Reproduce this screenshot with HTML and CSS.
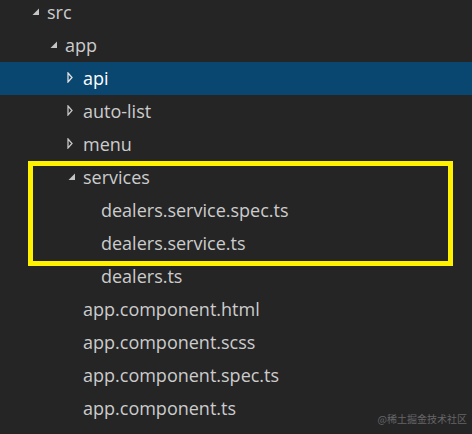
FILE: index.html
```html
<!DOCTYPE html>
<html>
<head>
<meta charset="utf-8">
<link rel="stylesheet" href="styles.css">
</head>
<body>
<div class="tree">
  <div class="row d0"><span class="tw"><svg class="exp" width="8" height="8" viewBox="0 0 8 8"><path d="M7 0.5 L7 7 L0.5 7 Z"/></svg></span><span class="label">src</span></div>
  <div class="row d1"><span class="tw"><svg class="exp" width="8" height="8" viewBox="0 0 8 8"><path d="M7 0.5 L7 7 L0.5 7 Z"/></svg></span><span class="label">app</span></div>
  <div class="row d2 selected"><span class="tw"><svg class="col" width="6" height="11" viewBox="0 0 6 11"><path d="M1 1 L5 5.5 L1 10 Z"/></svg></span><span class="label">api</span></div>
  <div class="row d2"><span class="tw"><svg class="col" width="6" height="11" viewBox="0 0 6 11"><path d="M1 1 L5 5.5 L1 10 Z"/></svg></span><span class="label">auto-list</span></div>
  <div class="row d2"><span class="tw"><svg class="col" width="6" height="11" viewBox="0 0 6 11"><path d="M1 1 L5 5.5 L1 10 Z"/></svg></span><span class="label">menu</span></div>
  <div class="group">
    <div class="highlight"></div>
    <div class="row d2"><span class="tw"><svg class="exp" width="8" height="8" viewBox="0 0 8 8"><path d="M7 0.5 L7 7 L0.5 7 Z"/></svg></span><span class="label">services</span></div>
    <div class="row d3"><span class="tw"></span><span class="label">dealers.service.spec.ts</span></div>
    <div class="row d3"><span class="tw"></span><span class="label">dealers.service.ts</span></div>
  </div>
  <div class="row d3"><span class="tw"></span><span class="label">dealers.ts</span></div>
  <div class="row d2"><span class="tw"></span><span class="label">app.component.html</span></div>
  <div class="row d2"><span class="tw"></span><span class="label">app.component.scss</span></div>
  <div class="row d2"><span class="tw"></span><span class="label">app.component.spec.ts</span></div>
  <div class="row d2"><span class="tw"></span><span class="label">app.component.ts</span></div>
</div>
<div class="watermark">@稀土掘金技术社区</div>
</body>
</html>
```
FILE: styles.css
```css
html, body {
  margin: 0;
  padding: 0;
  width: 472px;
  height: 434px;
  overflow: hidden;
  background: #252526;
}
body {
  position: relative;
  font-family: "Open Sans", "Noto Sans", sans-serif;
}
.tree {
  margin-top: -4px;
}
.row {
  display: flex;
  align-items: center;
  height: 33px;
  font-size: 18px;
  color: #cccccc;
  white-space: nowrap;
}
.row.selected {
  background: #094771;
  color: #ffffff;
}
.d0 { padding-left: 31px; }
.d1 { padding-left: 49px; }
.d2 { padding-left: 67px; }
.d3 { padding-left: 85px; }
.tw {
  width: 16px;
  height: 33px;
  display: flex;
  align-items: center;
  flex-shrink: 0;
}
.exp {
  margin-left: 1px;
  margin-top: -1px;
}
.exp path {
  fill: #c5c5c5;
}
.col {
  margin-left: 0px;
  margin-top: -2px;
}
.col path {
  fill: none;
  stroke: #c5c5c5;
  stroke-width: 1.3;
}
.selected .col path {
  stroke: #e0e0e0;
}
.label {
  line-height: 33px;
}
.group {
  position: relative;
}
.highlight {
  position: absolute;
  left: 28px;
  top: 0;
  width: 415px;
  height: 95px;
  border: 5px solid #fff200;
}
.watermark {
  position: absolute;
  right: 5px;
  bottom: 8px;
  font-family: "Noto Sans CJK SC", sans-serif;
  font-size: 10px;
  color: #666666;
}
```
